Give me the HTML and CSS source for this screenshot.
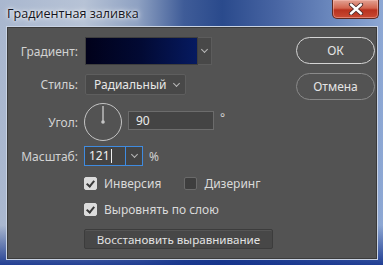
FILE: index.html
```html
<!DOCTYPE html>
<html lang="ru">
<head>
  <meta charset="UTF-8" />
  <title>Градиентная заливка</title>
  <link rel="stylesheet" href="styles.css">
</head>
<body>
  <div class="window">
    <div class="titlebar">
      <span class="title">Градиентная заливка</span>
      <button class="close" aria-label="Закрыть">
        <svg width="16" height="12" viewBox="0 0 16 12">
          <path d="M3 1.5 L13 10.5 M13 1.5 L3 10.5" stroke="#4a2a2a" stroke-width="4.2" stroke-linecap="round"/>
          <path d="M3 1.5 L13 10.5 M13 1.5 L3 10.5" stroke="#ffffff" stroke-width="2.4" stroke-linecap="round"/>
        </svg>
      </button>
    </div>

    <div class="client">
      <div class="form">
        <div class="row row-gradient">
          <label class="label">Градиент:</label>
          <div class="gradient-picker">
            <div class="swatch"></div>
            <div class="drop"><span class="chev"></span></div>
          </div>
        </div>

        <div class="row row-style">
          <label class="label">Стиль:</label>
          <div class="select">
            <span>Радиальный</span>
            <span class="chev"></span>
          </div>
        </div>

        <div class="row row-angle">
          <label class="label">Угол:</label>
          <div class="dial">
            <svg width="40" height="40" viewBox="0 0 40 40">
              <circle cx="20" cy="20" r="18.5" fill="none" stroke="#c4c4c4" stroke-width="1"/>
              <line x1="20" y1="20" x2="20" y2="4" stroke="#c4c4c4" stroke-width="1.4"/>
              <circle cx="20" cy="20" r="1.8" fill="#c4c4c4"/>
            </svg>
          </div>
          <div class="text-input angle">90</div>
          <span class="unit deg">°</span>
        </div>

        <div class="row row-scale">
          <label class="label">Масштаб:</label>
          <div class="combo">
            <span class="combo-value">121<span class="caret"></span></span>
            <span class="combo-drop"><span class="chev"></span></span>
          </div>
          <span class="unit">%</span>
        </div>

        <div class="row row-check row-check1">
          <span class="label"></span>
          <label class="check"><span class="box on"></span>Инверсия</label>
          <label class="check dither"><span class="box"></span>Дизеринг</label>
        </div>

        <div class="row row-check row-check2">
          <span class="label"></span>
          <label class="check"><span class="box on"></span>Выровнять по слою</label>
        </div>

        <div class="row row-reset">
          <span class="label"></span>
          <button class="reset">Восстановить выравнивание</button>
        </div>
      </div>

      <div class="actions">
        <button class="pill primary">ОК</button>
        <button class="pill">Отмена</button>
      </div>
    </div>
  </div>
</body>
</html>
```

FILE: styles.css
```css
html, body {
  margin: 0;
  height: 100%;
}

body {
  font-family: "Noto Sans", "Open Sans", sans-serif;
  font-size: 12px;
  background: #2a4a98;
}

.window {
  width: 383px;
  height: 265px;
  box-sizing: border-box;
  padding: 0 6px 6px 7px;
  background:
    linear-gradient(180deg, rgba(255, 255, 255, 0) 0%, rgba(255, 255, 255, 0) 85%, rgba(20, 50, 140, 0.9) 100%),
    linear-gradient(90deg, #a9b7cf 0%, #b7c3d6 22%, #8ea1c2 36%, #3f5c98 48%, #2a4a8c 58%, #4865a3 72%, #6f8cc0 88%, #8ea8d4 100%);
  display: flex;
  flex-direction: column;
}

.titlebar {
  height: 27px;
  display: flex;
  align-items: flex-start;
  justify-content: space-between;
  flex-shrink: 0;
}

.title {
  margin-top: 5px;
  color: #141420;
  font-family: "Open Sans", sans-serif;
  font-size: 12.6px;
  text-shadow: 0 0 6px #ffffff, 0 0 3px #ffffff;
}

.close {
  width: 47px;
  height: 19px;
  margin-right: -2px;
  padding: 0;
  border: 1px solid #5e2a22;
  border-top: none;
  border-radius: 0 0 5px 5px;
  background: linear-gradient(180deg, #e2a294 0%, #d2654f 45%, #b8321f 55%, #c94a33 100%);
  box-shadow: inset 0 0 0 1px rgba(255, 200, 190, 0.45);
  display: flex;
  align-items: center;
  justify-content: center;
}

.client {
  flex: 1;
  background: #535353;
  border: 1px solid #3b3b3b;
  box-shadow: 0 0 0 1px #c9d3e4;
  display: flex;
  color: #d4d4d4;
}

.form {
  width: 280px;
  padding-top: 9px;
  display: flex;
  flex-direction: column;
}

.row {
  display: flex;
  align-items: center;
}

.label {
  width: 70px;
  flex-shrink: 0;
  text-align: right;
  margin-right: 6px;
  color: #d2d2d2;
}

.chev {
  display: inline-block;
  width: 4px;
  height: 4px;
  border-right: 1px solid #b8b8b8;
  border-bottom: 1px solid #b8b8b8;
  transform: rotate(45deg);
  margin-top: -3px;
}

/* gradient */
.gradient-picker {
  display: flex;
  height: 28px;
  margin-left: 1px;
}

.swatch {
  width: 111px;
  border: 1px solid #3e3e3e;
  background: linear-gradient(90deg, #01011a 0%, #020a34 50%, #061a60 100%);
}

.drop {
  width: 13px;
  background: #484848;
  border: 1px solid #5c5c5c;
  border-left: none;
  display: flex;
  align-items: center;
  justify-content: center;
}

/* style */
.row-style {
  margin-top: 9px;
}

.select {
  box-sizing: border-box;
  width: 101px;
  height: 21px;
  margin-left: 1px;
  border: 1px solid #5e5e5e;
  background: #484848;
  border-radius: 2px;
  display: flex;
  align-items: center;
  justify-content: space-between;
  padding: 0 6px 0 8px;
  color: #e6e6e6;
}

/* angle */
.row-angle {
  margin-top: 7px;
}

.dial {
  width: 40px;
  height: 40px;
  margin-left: -1px;
}

.text-input {
  box-sizing: border-box;
  height: 19px;
  border: 1px solid #6c6c6c;
  background: #444444;
  color: #ececec;
  padding: 0 7px;
  line-height: 17px;
}

.angle {
  width: 86px;
  margin-left: 5px;
  margin-top: -3px;
}

.unit {
  margin-left: 6px;
  color: #d0d0d0;
}

.deg {
  margin-top: -9px;
}

/* scale */
.row-scale {
  margin-top: 4px;
}

.combo {
  display: flex;
  height: 20px;
  box-sizing: border-box;
  border: 1px solid #3f8be0;
  background: #444444;
}

.combo-value {
  width: 40px;
  padding-left: 4px;
  box-sizing: border-box;
  color: #f0f0f0;
  line-height: 18px;
  display: flex;
  align-items: center;
}

.caret {
  display: inline-block;
  width: 1px;
  height: 14px;
  background: #f0f0f0;
  margin-left: 1px;
}

.combo-drop {
  width: 16px;
  border-left: 1px solid #3f8be0;
  display: flex;
  align-items: center;
  justify-content: center;
}

/* checks */
.row-check {
  height: 13px;
}

.row-check1 {
  margin-top: 11px;
}

.row-check2 {
  margin-top: 13px;
}

.check {
  display: flex;
  align-items: center;
  height: 13px;
  line-height: 13px;
  color: #dadada;
}

.dither {
  margin-left: 23px;
}

.box {
  width: 13px;
  height: 13px;
  box-sizing: border-box;
  border-radius: 2px;
  margin-right: 7px;
  background: #3e3e3e;
  border: 1px solid #6a6a6a;
  position: relative;
}

.box.on {
  background: #dcdcdc;
  border-color: #dcdcdc;
}

.box.on::after {
  content: "";
  position: absolute;
  left: 3px;
  top: 1px;
  width: 3px;
  height: 6px;
  border-right: 2px solid #3a3a3a;
  border-bottom: 2px solid #3a3a3a;
  transform: rotate(40deg);
}

/* reset */
.row-reset {
  margin-top: 13px;
}

.reset {
  width: 189px;
  height: 20px;
  font-family: inherit;
  font-size: 11.6px;
  color: #e2e2e2;
  background: #474747;
  border: 1px solid #3c3c3c;
  border-radius: 2px;
  box-shadow: inset 0 1px 0 #555555;
  padding: 0;
}

/* dialog buttons */
.actions {
  padding-top: 9px;
  padding-left: 8px;
  display: flex;
  flex-direction: column;
  gap: 9px;
}

.pill {
  width: 79px;
  height: 27px;
  border-radius: 14px;
  border: 1px solid #8a8a8a;
  background: transparent;
  color: #e4e4e4;
  font-family: inherit;
  font-size: 12px;
  padding: 0;
}

.pill.primary {
  border: 1.5px solid #d4d4d4;
}
```
